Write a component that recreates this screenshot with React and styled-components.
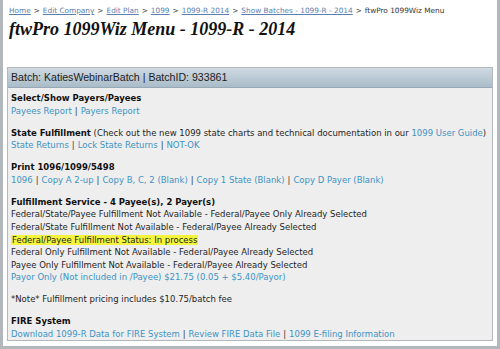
import React from 'react';
import styled, { createGlobalStyle } from 'styled-components';

const GlobalStyle = createGlobalStyle`
  html, body {
    margin: 0;
    background: #ffffff;
  }
`;

const Frame = styled.div`
  width: 500px;
  height: 349px;
  box-sizing: border-box;
  border: 3px solid #b2b7bc;
  border-top: none;
  padding: 4px 4px 0 4px;
  overflow: hidden;
  font-family: "DejaVu Sans", Verdana, sans-serif;
`;

const Crumbs = styled.div`
  font-size: 7.35px;
  line-height: 13px;
  color: #333;
  padding-left: 2px;
  white-space: nowrap;
`;

const CrumbLink = styled.a`
  color: #5a7fb0;
  text-decoration: underline;
`;

const Sep = styled.span`
  margin: 0 3px;
  color: #444;
`;

const Title = styled.h1`
  margin: 0 0 0 2px;
  font-family: "Liberation Serif", "Times New Roman", serif;
  font-style: italic;
  font-weight: bold;
  font-size: 18px;
  line-height: 24px;
  color: #111;
`;

const Panel = styled.div`
  margin-top: 26px;
  border: 1px solid #b4b8bc;
  background: #eeeeee;
  height: 274px;
  box-sizing: border-box;
`;

const PanelHeader = styled.div`
  height: 20px;
  box-sizing: border-box;
  padding-left: 3px;
  background: linear-gradient(#cfdae2, #a9bcc9);
  border-bottom: 1px solid #97a9b6;
  font-family: "Liberation Sans", Arial, sans-serif;
  font-size: 10.6px;
  line-height: 19px;
  color: #1c1c1c;
`;

const Body = styled.div`
  padding: 4px 3px 0 3px;
  font-size: 8.5px;
  line-height: 12.6px;
  color: #1e1e1e;
`;

const Section = styled.div`
  margin-bottom: 9.4px;
`;

const Heading = styled.span`
  font-weight: bold;
  color: #111;
`;

const Line = styled.div`
  white-space: nowrap;
`;

const Link = styled.a`
  color: #3c93c4;
  text-decoration: none;
`;

const Pipe = styled.span`
  color: #333;
  margin: 0 3px;
`;

const Highlight = styled.span`
  background: #f4f43c;
  padding: 0 1px;
`;

const crumbs = ['Home', 'Edit Company', 'Edit Plan', '1099', '1099-R 2014', 'Show Batches - 1099-R - 2014'];

function Links({ items }) {
  return (
    <Line>
      {items.map((t, i) => (
        <React.Fragment key={t}>
          {i > 0 && <Pipe>|</Pipe>}
          <Link>{t}</Link>
        </React.Fragment>
      ))}
    </Line>
  );
}

export default function App() {
  return (
    <>
      <GlobalStyle />
      <Frame>
        <Crumbs>
          {crumbs.map((c) => (
            <React.Fragment key={c}>
              <CrumbLink>{c}</CrumbLink>
              <Sep>&gt;</Sep>
            </React.Fragment>
          ))}
          ftwPro 1099Wiz Menu
        </Crumbs>
        <Title>ftwPro 1099Wiz Menu - 1099-R - 2014</Title>
        <Panel>
          <PanelHeader>Batch: KatiesWebinarBatch | BatchID: 933861</PanelHeader>
          <Body>
            <Section>
              <Line><Heading>Select/Show Payers/Payees</Heading></Line>
              <Links items={['Payees Report', 'Payers Report']} />
            </Section>
            <Section>
              <Line>
                <Heading>State Fulfillment</Heading> (Check out the new 1099 state charts and technical documentation in our <Link>1099 User Guide</Link>)
              </Line>
              <Links items={['State Returns', 'Lock State Returns', 'NOT-OK']} />
            </Section>
            <Section>
              <Line><Heading>Print 1096/1099/5498</Heading></Line>
              <Links items={['1096', 'Copy A 2-up', 'Copy B, C, 2 (Blank)', 'Copy 1 State (Blank)', 'Copy D Payer (Blank)']} />
            </Section>
            <Section>
              <Line><Heading>Fulfillment Service - 4 Payee(s), 2 Payer(s)</Heading></Line>
              <Line>Federal/State/Payee Fulfillment Not Available - Federal/Payee Only Already Selected</Line>
              <Line>Federal/State Fulfillment Not Available - Federal/Payee Already Selected</Line>
              <Line><Highlight>Federal/Payee Fulfillment Status: In process</Highlight></Line>
              <Line>Federal Only Fulfillment Not Available - Federal/Payee Already Selected</Line>
              <Line>Payee Only Fulfillment Not Available - Federal/Payee Already Selected</Line>
              <Line><Link>Payor Only (Not included in /Payee) $21.75 (0.05 + $5.40/Payor)</Link></Line>
            </Section>
            <Section>
              <Line>*Note* Fulfillment pricing includes $10.75/batch fee</Line>
            </Section>
            <Section>
              <Line><Heading>FIRE System</Heading></Line>
              <Links items={['Download 1099-R Data for FIRE System', 'Review FIRE Data File', '1099 E-filing Information']} />
            </Section>
          </Body>
        </Panel>
      </Frame>
    </>
  );
}
